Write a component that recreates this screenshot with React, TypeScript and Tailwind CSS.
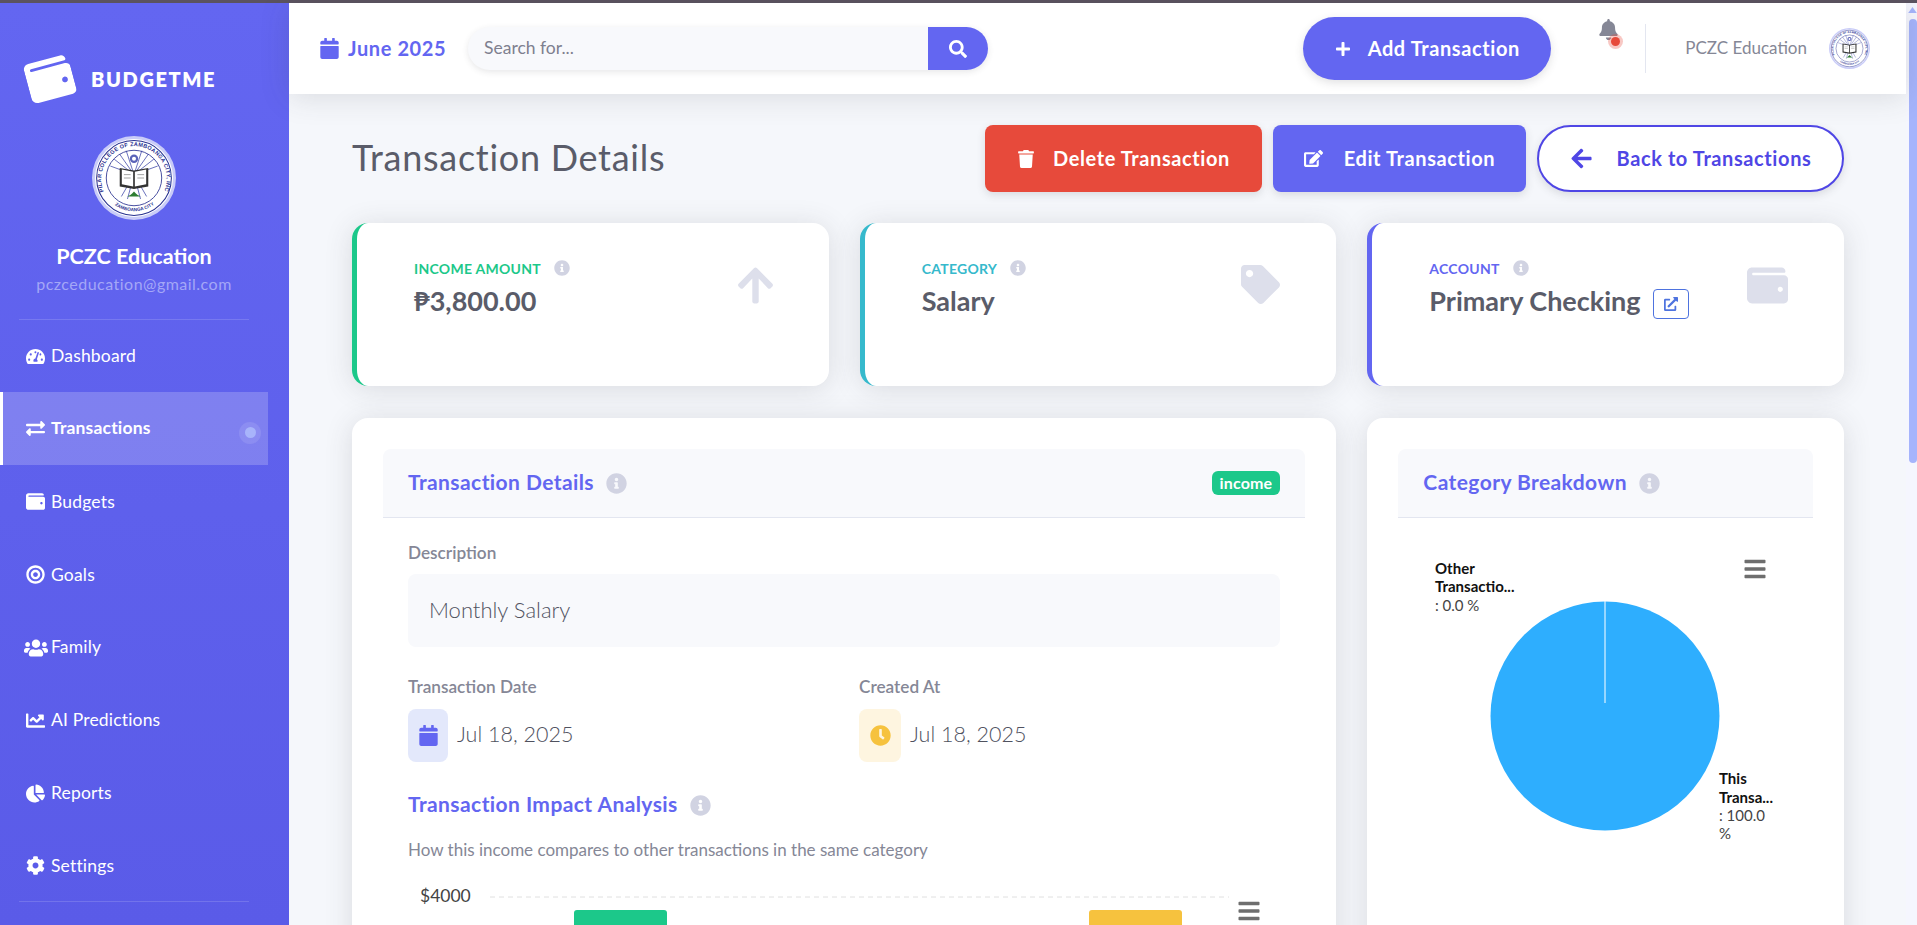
import {
  FaArrowLeft, FaArrowUp, FaBars, FaBell, FaBullseye, FaCalendar, FaChartLine, FaChartPie, FaClock, FaCog,
  FaEdit, FaExchangeAlt, FaExternalLinkAlt, FaInfoCircle, FaPlus, FaSearch, FaTachometerAlt, FaTag, FaTrash,
  FaUsers, FaWallet,
} from 'react-icons/fa';
import type { ReactNode } from 'react';

const navItems = [
  { label: 'Dashboard', icon: <FaTachometerAlt className="text-[19px]" /> },
  { label: 'Transactions', icon: <FaExchangeAlt className="text-[19px]" />, active: true },
  { label: 'Budgets', icon: <FaWallet className="text-[19px]" /> },
  { label: 'Goals', icon: <FaBullseye className="text-[19px]" /> },
  { label: 'Family', icon: <FaUsers className="text-[24px] shrink-0" /> },
  { label: 'AI Predictions', icon: <FaChartLine className="text-[19px]" /> },
  { label: 'Reports', icon: <FaChartPie className="text-[19px]" /> },
  { label: 'Settings', icon: <FaCog className="text-[19px]" /> },
];

// school crest, simplified
function Crest({ id }: { id: string }) {
  const rays = [-70, -52, -35, -18, 18, 35, 52, 70, 150, 165, 195, 210];
  return (
    <svg viewBox="0 0 100 100" className="w-full h-full">
      <circle cx="50" cy="50" r="50" fill="#c9ccf8" />
      <circle cx="50" cy="50" r="46.5" fill="#ffffff" />
      <circle cx="50" cy="50" r="44.5" fill="none" stroke="#27308f" strokeWidth="1.2" />
      <circle cx="50" cy="50" r="33" fill="#ffffff" stroke="#27308f" strokeWidth="1" />
      <defs>
        <path id={id} d="M 14 66 A 39 39 0 1 1 86 66" />
        <path id={`${id}b`} d="M 20 76 A 40 40 0 0 0 80 76" />
      </defs>
      <text fontSize="6.6" fontWeight="700" fill="#27308f" fontFamily="'Liberation Sans', sans-serif">
        <textPath href={`#${id}`} textLength="152" lengthAdjust="spacing">PILAR COLLEGE OF ZAMBOANGA CITY, INC</textPath>
      </text>
      <text fontSize="5.5" fontWeight="700" fill="#27308f" fontFamily="'Liberation Sans', sans-serif">
        <textPath href={`#${id}b`} startOffset="14%">ZAMBOANGA CITY</textPath>
      </text>
      {rays.map((a) => (
        <line
          key={a}
          x1="50"
          y1="46"
          x2={50 + 30 * Math.sin((a * Math.PI) / 180)}
          y2={46 - 30 * Math.cos((a * Math.PI) / 180)}
          stroke="#3a44a8"
          strokeWidth="0.9"
        />
      ))}
      <circle cx="50" cy="27" r="5" fill="#5a63b8" />
      <circle cx="50" cy="27" r="2.4" fill="#ffffff" />
      <path d="M33 38 L50 41 L67 38 L67 60 L50 63 L33 60 Z" fill="#333333" />
      <path d="M35.5 40 L49 42.5 L49 60 L35.5 57.5 Z M51 42.5 L64.5 40 L64.5 57.5 L51 60 Z" fill="#ffffff" />
      <path d="M38 46 H46 M38 50 H46 M54 46 H62 M54 50 H62" stroke="#777777" strokeWidth="0.8" />
      <path d="M50 66 C47 70 44 71 42 72 H58 C56 71 53 70 50 66 Z" fill="#2e7d32" />
    </svg>
  );
}

function Info({ className }: { className: string }) {
  return <FaInfoCircle className={`text-[#d1d3e2] ${className}`} />;
}

function StatCard({
  border, labelColor, label, icon, children,
}: {
  border: string;
  labelColor: string;
  label: string;
  icon: ReactNode;
  children: ReactNode;
}) {
  return (
    <div className={`h-[163px] bg-white rounded-2xl border-l-[5px] ${border} shadow-[0_3px_28px_rgba(58,59,69,0.15)] pl-[57px] pr-[56px] pt-[34px] flex justify-between`}>
      <div>
        <div className="flex items-center gap-[13px] h-[22px]">
          <span className={`text-[14px] font-bold uppercase tracking-[0.02em] ${labelColor}`}>{label}</span>
          <Info className="text-[16px]" />
        </div>
        <div className="mt-[3px] flex items-center gap-[12px] h-[38px] text-[27px] font-bold text-[#5a5c69]">{children}</div>
      </div>
      <div className="pt-[8px] text-[#dddfeb]">{icon}</div>
    </div>
  );
}

function ActionButton({ className, icon, gap, children }: { className: string; icon: ReactNode; gap: string; children: ReactNode }) {
  return (
    <button className={`h-[67px] flex items-center justify-center text-[20px] font-bold tracking-[0.03em] shadow-[0_3px_8px_rgba(58,59,69,0.15)] ${gap} ${className}`}>
      {icon}
      <span className="pb-[2px]">{children}</span>
    </button>
  );
}

function PanelHeader({ title, right }: { title: string; right?: ReactNode }) {
  return (
    <div className="h-[69px] bg-[#f8f9fc] border-b border-[#e3e6f0] rounded-t-lg px-[25px] flex items-center justify-between">
      <div className="flex items-center gap-[12px]">
        <h2 className="text-[21px] pb-[2px] font-bold tracking-[0.02em] text-[#6366f1]">{title}</h2>
        <Info className="text-[21px]" />
      </div>
      {right}
    </div>
  );
}

function DateField({ label, tile, icon, value }: { label: string; tile: string; icon: ReactNode; value: string }) {
  return (
    <div>
      <div className="text-[17.2px] leading-6 font-semibold text-[#858796]">{label}</div>
      <div className="mt-[10px] flex items-center gap-[9px]">
        <div className={`h-[53px] rounded-lg flex items-center justify-center text-[21px] ${tile}`}>{icon}</div>
        <span className="text-[21.5px] pb-[3px] font-light text-[#50525f]">{value}</span>
      </div>
    </div>
  );
}

function ImpactChart() {
  return (
    <svg viewBox="0 0 870 66" className="w-[870px] h-[66px] block">
      <text x="12" y="38" fontSize="17.5" fill="#444444">$4000</text>
      <line x1="82" y1="33" x2="821" y2="33" stroke="#e0e0e0" strokeDasharray="5 4" />
      <path d="M166 66 V49 a3 3 0 0 1 3 -3 H256 a3 3 0 0 1 3 3 V66 Z" fill="#1cc88a" />
      <path d="M681 66 V49 a3 3 0 0 1 3 -3 H771 a3 3 0 0 1 3 3 V66 Z" fill="#f6c23e" />
    </svg>
  );
}

function PieChart() {
  return (
    <svg viewBox="0 0 413 400" className="w-[413px] h-[400px] block">
      <circle cx="207" cy="198" r="114.5" fill="#2eaefe" />
      <line x1="207" y1="83" x2="207" y2="185" stroke="#ffffff" strokeWidth="1" />
      <g fontSize="15">
        <text x="37" y="56" fontWeight="700" fill="#111111">Other</text>
        <text x="37" y="74" fontWeight="700" fill="#111111">Transactio...</text>
        <text x="37" y="93" fill="#444444">: 0.0 %</text>
        <text x="321" y="266" fontWeight="700" fill="#111111">This</text>
        <text x="321" y="285" fontWeight="700" fill="#111111">Transa...</text>
        <text x="321" y="303" fill="#444444">: 100.0</text>
        <text x="321" y="321" fill="#444444">%</text>
      </g>
    </svg>
  );
}

export default function App() {
  return (
    <div className="h-[925px] w-full overflow-hidden flex flex-col font-['Lato',sans-serif] bg-[#f5f7fb]">
      <div className="h-[3px] bg-[#5b5360] shrink-0" />
      <div className="flex-1 flex min-h-0">
        {/* Sidebar */}
        <aside className="w-[289px] shrink-0 bg-gradient-to-b from-[#6366f1] to-[#5a5be8] text-white">
          <div className="w-[268px]">
            <div className="flex items-center pl-[27px] pt-[52px] h-[133px]">
              <FaWallet className="text-[46px] -rotate-[15deg] mr-[18px] mb-[33px]" />
              <span className="text-[20px] font-extrabold tracking-[0.08em] mb-[33px]">BUDGETME</span>
            </div>
            <div className="w-[84px] h-[84px] mx-auto">
              <Crest id="crest-side" />
            </div>
            <div className="mt-[22px] text-center text-[21.5px] leading-7 font-bold">PCZC Education</div>
            <div className="text-center text-[16px] tracking-[0.03em] leading-[28px] text-[#a4a7f7]">pczceducation@gmail.com</div>
            <div className="mx-[19px] mt-[21px] mb-[-1px] h-px bg-white/15" />
          </div>
          <nav>
            {navItems.map((item) => (
              <div
                key={item.label}
                className={`h-[72.8px] flex items-center relative ${item.active ? 'w-[268px] bg-white/20 border-l-[3px] border-white font-bold pl-[23px]' : 'pl-[26px] pt-[2px]'}`}
              >
                <span className="w-[19px] flex justify-center">{item.icon}</span>
                <span className={`ml-[6px] text-[17.5px] tracking-[0.01em] ${item.active ? 'pb-[1px]' : ''}`}>{item.label}</span>
                {item.active && (
                  <span className="absolute right-[7px] top-[30px] w-[22px] h-[22px] rounded-full bg-white/10 flex items-center justify-center">
                    <span className="w-[11px] h-[11px] rounded-full bg-[#a8b4fb]" />
                  </span>
                )}
              </div>
            ))}
          </nav>
          <div className="w-[268px]">
            <div className="mx-[19px] h-px bg-white/15" />
          </div>
        </aside>

        {/* Main */}
        <div className="flex-1 min-w-0 flex flex-col">
          <header className="h-[91px] shrink-0 bg-white shadow-[0_3px_28px_rgba(58,59,69,0.15)] relative z-10 flex items-center pl-[30px] pr-[36px]">
            <div className="flex items-center gap-[8px] text-[#6366f1] text-[20px] font-bold tracking-[0.03em] w-[149px]">
              <FaCalendar className="text-[21px]" />
              <span className="pb-[2px]">June 2025</span>
            </div>
            <div className="w-[520px] h-[43px] rounded-full bg-[#f8f9fc] shadow-[0_2px_6px_rgba(58,59,69,0.12)] flex items-center justify-between overflow-hidden">
              <span className="pl-[16px] text-[17.5px] text-[#7e808f]">Search for...</span>
              <span className="w-[60px] h-full bg-[#6366f1] flex items-center justify-center text-white text-[18px]">
                <FaSearch />
              </span>
            </div>
            <button className="ml-auto w-[248px] h-[63px] rounded-full bg-[#6366f1] text-white text-[20px] font-bold tracking-[0.03em] flex items-center justify-center gap-[17px] shadow-[0_3px_8px_rgba(58,59,69,0.15)]">
              <FaPlus className="text-[16px]" />
              <span className="pb-[1px]">Add Transaction</span>
            </button>
            <div className="relative ml-[47px] w-[19px] h-[73px] text-[21px] text-[#858796]">
              <FaBell className="mt-[7px]" />
              <span className="absolute left-[13px] top-[25px] w-[9px] h-[9px] rounded-full bg-[#e74a3b] ring-[3px] ring-[#e74a3b]/30" />
            </div>
            <div className="ml-[28px] w-px h-[49px] bg-[#e3e6f0]" />
            <span className="ml-[39px] text-[17px] text-[#858796] pb-[2px]">PCZC Education</span>
            <div className="ml-[22px] w-[41px] h-[41px]">
              <Crest id="crest-top" />
            </div>
          </header>

          <main className="flex-1 min-h-0 overflow-hidden pl-[63px] pr-[62px] pt-[31px]">
            <div className="flex items-center justify-between mb-[31px]">
              <h1 className="text-[36px] tracking-[0.02em] pb-[4px] text-[#5a5c69]">Transaction Details</h1>
              <div className="flex gap-[11px]">
                <ActionButton className="w-[277px] rounded-lg bg-[#e74a3b] text-white" gap="gap-[18px]" icon={<FaTrash className="text-[18px]" />}>
                  Delete Transaction
                </ActionButton>
                <ActionButton className="w-[253px] rounded-lg bg-[#6366f1] text-white" gap="gap-[21px]" icon={<FaEdit className="text-[19px]" />}>
                  Edit Transaction
                </ActionButton>
                <ActionButton className="w-[307px] rounded-full bg-white border-2 border-[#4f46e5] text-[#4f46e5]" gap="gap-[24px]" icon={<FaArrowLeft className="text-[23px]" />}>
                  Back to Transactions
                </ActionButton>
              </div>
            </div>

            <div className="grid grid-cols-3 gap-x-[31px] gap-y-[32px]">
              <StatCard border="border-[#1cc88a]" labelColor="text-[#1cc88a]" label="Income Amount" icon={<FaArrowUp className="text-[41px] -mr-[3px]" />}>
                ₱3,800.00
              </StatCard>
              <StatCard border="border-[#36b9cc]" labelColor="text-[#36b9cc]" label="Category" icon={<FaTag className="text-[39px]" />}>
                Salary
              </StatCard>
              <StatCard border="border-[#6366f1]" labelColor="text-[#6366f1]" label="Account" icon={<FaWallet className="text-[41px]" />}>
                <span>Primary Checking</span>
                <span className="mt-[6px] w-[36px] h-[30px] border border-[#4e73df] rounded text-[#4e73df] text-[14px] flex items-center justify-center">
                  <FaExternalLinkAlt />
                </span>
              </StatCard>

              <section className="col-span-2 h-[700px] bg-white rounded-2xl shadow-[0_3px_28px_rgba(58,59,69,0.15)] p-[31px]">
                <PanelHeader
                  title="Transaction Details"
                  right={<span className="h-[24px] px-[8px] rounded-md bg-[#1cc88a] text-white text-[16px] tracking-[0.01em] font-bold flex items-center">income</span>}
                />
                <div className="px-[25px] pt-[23px]">
                  <div className="text-[17.2px] leading-6 font-semibold text-[#858796]">Description</div>
                  <div className="mt-[9px] h-[73px] rounded-lg bg-[#f8f9fc] pl-[21px] pb-[3px] flex items-center text-[22px] font-light text-[#50525f]">Monthly Salary</div>
                  <div className="mt-[28px] grid grid-cols-[451px_1fr]">
                    <DateField label="Transaction Date" tile="w-[40px] bg-[#e3e8fb] text-[#6366f1]" icon={<FaCalendar />} value="Jul 18, 2025" />
                    <DateField label="Created At" tile="w-[42px] bg-[#fef5e0] text-[#f6c23e]" icon={<FaClock />} value="Jul 18, 2025" />
                  </div>
                  <div className="mt-[29px] flex items-center gap-[12px] h-[28px]">
                    <h3 className="text-[21px] pb-[2px] font-bold tracking-[0.02em] text-[#6366f1]">Transaction Impact Analysis</h3>
                    <Info className="text-[21px]" />
                  </div>
                  <p className="mt-[19px] text-[17px] leading-6 text-[#858796]">How this income compares to other transactions in the same category</p>
                  <div className="relative mt-[2px]">
                    <ImpactChart />
                    <FaBars className="absolute left-[829px] top-[35px] text-[24px] text-[#6e6e6e]" />
                  </div>
                </div>
              </section>

              <section className="h-[700px] bg-white rounded-2xl shadow-[0_3px_28px_rgba(58,59,69,0.15)] p-[31px]">
                <PanelHeader title="Category Breakdown" />
                <div className="relative">
                  <PieChart />
                  <FaBars className="absolute left-[345px] top-[39px] text-[24px] text-[#6e6e6e]" />
                </div>
              </section>
            </div>
          </main>
        </div>

        {/* Scrollbar */}
        <div className="w-[11px] shrink-0 bg-[#f5f6fe] flex flex-col items-center pt-[4px] pl-[2px]">
          <svg viewBox="0 0 10 7" className="w-[9px] h-[6px] text-[#a5b4fc]">
            <path d="M5 0 L10 7 H0 Z" fill="currentColor" />
          </svg>
          <div className="mt-[6px] w-[8px] h-[444px] rounded-full bg-[#a5b4fc]" />
        </div>
      </div>
    </div>
  );
}
